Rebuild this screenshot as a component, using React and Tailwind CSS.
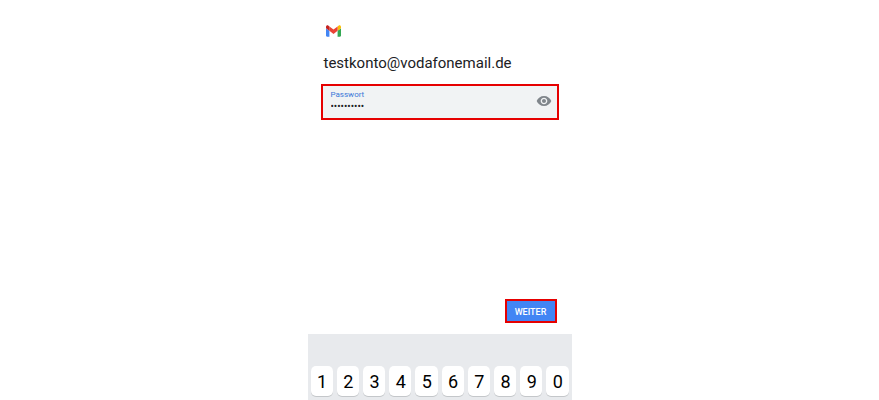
import { useState } from "react";

const KEYS = ["1", "2", "3", "4", "5", "6", "7", "8", "9", "0"];

const GmailLogo = () => (
  <svg className="w-[15px] h-3" viewBox="52 42 88 66" role="img" aria-label="Gmail">
    <path fill="#4285f4" d="M58 108h14V74L52 59v43c0 3.32 2.69 6 6 6" />
    <path fill="#34a853" d="M120 108h14c3.32 0 6-2.69 6-6V59l-20 15" />
    <path fill="#fbbc04" d="M120 48v26l20-15v-8c0-7.42-8.47-11.65-14.4-7.2" />
    <path fill="#ea4335" d="M72 74V48l24 18 24-18v26L96 92" />
    <path fill="#c5221f" d="M52 51v8l20 15V48l-5.6-4.2c-5.94-4.45-14.4-.22-14.4 7.2" />
  </svg>
);

const EyeIcon = () => (
  <svg className="w-4 h-4" viewBox="0 0 24 24" fill="currentColor" aria-hidden="true">
    <path d="M12 4.5C7 4.5 2.73 7.61 1 12c1.73 4.39 6 7.5 11 7.5s9.27-3.11 11-7.5c-1.73-4.39-6-7.5-11-7.5zM12 17c-2.76 0-5-2.24-5-5s2.24-5 5-5 5 2.24 5 5-2.24 5-5 5zm0-8c-1.66 0-3 1.34-3 3s1.34 3 3 3 3-1.34 3-3-1.34-3-3-3z" />
  </svg>
);

export default function App() {
  const [password, setPassword] = useState("geheim1234");
  const [visible, setVisible] = useState(false);

  return (
    <div className="min-h-screen bg-white font-['Roboto',sans-serif]">
      <div className="mx-auto flex min-h-screen w-full max-w-[264px] flex-col">
        <form className="flex flex-1 flex-col px-[13px] pt-[25px] pb-[11px]" onSubmit={(e) => e.preventDefault()}>
          <div className="pl-[5px]">
            <GmailLogo />
          </div>
          <h1 className="mt-4 pl-[3px] text-[15px] leading-5 text-[#202124]">testkonto@vodafonemail.de</h1>

          {/* Password field */}
          <div className="mt-[11px] flex h-9 items-center border-2 border-[#e60000] bg-[#f1f3f4] pr-[5px] pb-0.5 pl-2">
            <div className="flex min-w-0 flex-1 flex-col">
              <label htmlFor="password" className="text-[8px] leading-3 text-[#3b78d8]">Passwort</label>
              <input
                id="password"
                type={visible ? "text" : "password"}
                value={password}
                onChange={(e) => setPassword(e.target.value)}
                className="h-3 w-full bg-transparent text-[10px] leading-3 text-[#202124] outline-none"
              />
            </div>
            <button type="button" aria-label="Passwort anzeigen" onClick={() => setVisible(!visible)} className="text-[#80868b]">
              <EyeIcon />
            </button>
          </div>

          <button
            type="submit"
            className="mt-auto mr-0.5 h-6 w-[52px] self-end border-2 border-[#e60000] bg-[#4285f4] pt-px text-[9px] leading-3 font-medium text-white"
          >
            WEITER
          </button>
        </form>

        {/* Number row of the keyboard */}
        <div className="flex gap-1 bg-[#e8eaed] px-[3px] pt-8 pb-1">
          {KEYS.map((key) => (
            <button
              key={key}
              type="button"
              onClick={() => setPassword(password + key)}
              className="h-[30px] flex-1 rounded-[5px] bg-white pt-0.5 pl-px text-[18px] leading-5 text-black shadow-[0_1px_0_#c4c7ca]"
            >
              {key}
            </button>
          ))}
        </div>
      </div>
    </div>
  );
}
